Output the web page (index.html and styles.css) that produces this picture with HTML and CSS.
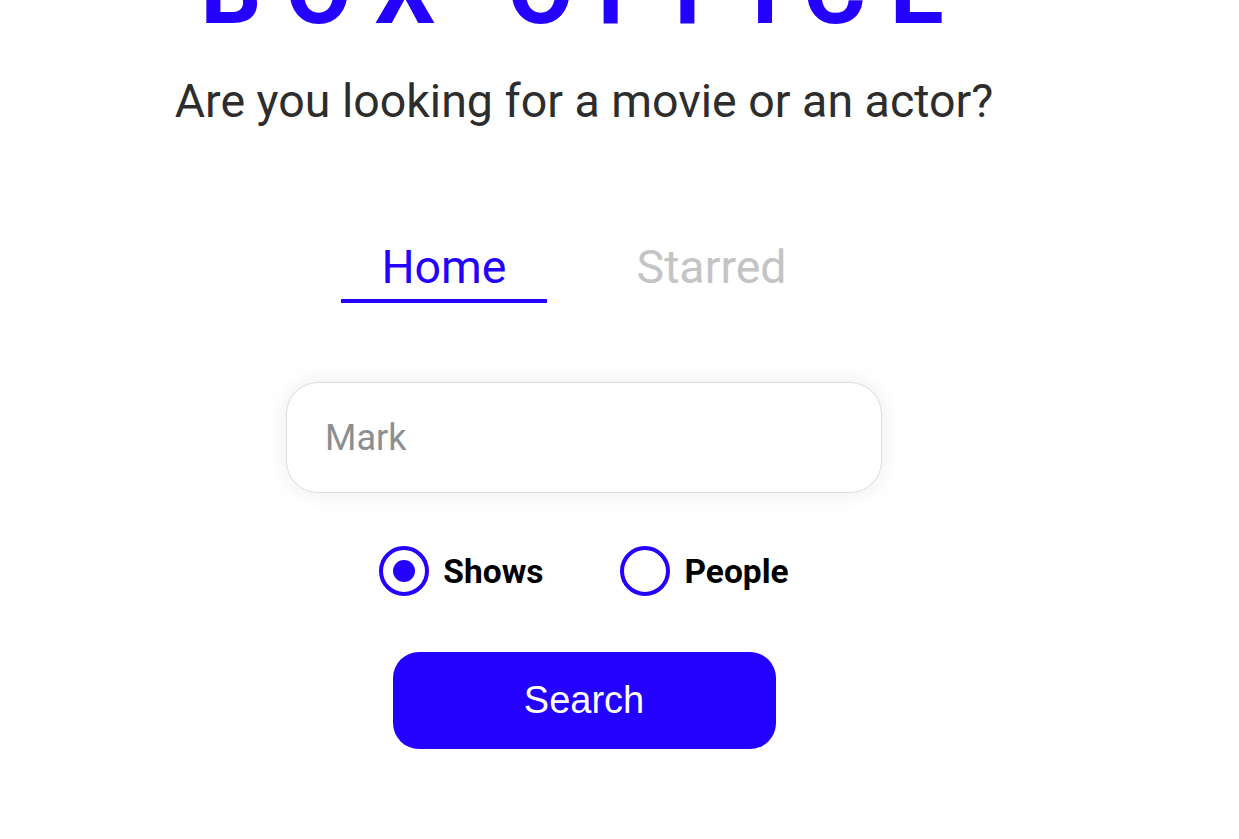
FILE: index.html
```html
<!DOCTYPE html>
<html lang="en">
<head>
<meta charset="utf-8">
<title>Box Office</title>
<link rel="stylesheet" href="styles.css">
</head>
<body>
<div class="page">
  <header class="title-wrap">
    <h1 class="title">Box Office</h1>
    <p class="subtitle">Are you looking for a movie or an actor?</p>
  </header>
  <nav class="tabs">
    <a class="tab tab-active" href="#">Home</a>
    <a class="tab" href="#">Starred</a>
  </nav>
  <main class="search">
    <input class="search-input" type="text" placeholder="Mark">
    <div class="radios">
      <label class="radio">
        <input type="radio" name="kind" checked>
        <span class="radio-mark"></span>
        <span class="radio-label">Shows</span>
      </label>
      <label class="radio">
        <input type="radio" name="kind">
        <span class="radio-mark"></span>
        <span class="radio-label">People</span>
      </label>
    </div>
    <button class="search-btn" type="button">Search</button>
  </main>
</div>
</body>
</html>
```

FILE: styles.css
```css
html, body {
  margin: 0;
  padding: 0;
  background: #ffffff;
}

body {
  font-family: Roboto, "Liberation Sans", sans-serif;
  overflow: hidden;
}

.page {
  width: 1168px;
  display: flex;
  flex-direction: column;
  align-items: center;
}

.title-wrap {
  text-align: center;
  margin-top: -66px;
}

.title {
  margin: 0;
  font-size: 96px;
  font-weight: 700;
  line-height: normal;
  letter-spacing: 24px;
  text-transform: uppercase;
  color: #2400ff;
}

.subtitle {
  margin: 28px 0 0;
  font-size: 46.5px;
  line-height: normal;
  color: #2d2d2d;
}

.tabs {
  display: flex;
  gap: 50px;
  margin-top: 112px;
}

.tab {
  display: block;
  padding: 0 40px 5px;
  font-size: 46.5px;
  line-height: normal;
  text-decoration: none;
  color: #c4c4c4;
  border-bottom: 4px solid transparent;
}

.tab-active {
  color: #2400ff;
  border-bottom-color: #2400ff;
}

.search {
  display: flex;
  flex-direction: column;
  align-items: center;
  margin-top: 79px;
}

.search-input {
  box-sizing: border-box;
  width: 596px;
  height: 111px;
  padding: 0 38px;
  border: 1px solid #dedede;
  border-radius: 32px;
  box-shadow: 0 0 22px rgba(0, 0, 0, 0.08);
  font-family: Roboto, "Liberation Sans", sans-serif;
  font-size: 36px;
  color: #333;
  outline: none;
  background: #fff;
}

.search-input::placeholder {
  color: #8e8e8e;
}

.radios {
  display: flex;
  gap: 77px;
  margin-top: 53px;
}

.radio {
  display: flex;
  align-items: center;
  gap: 14px;
  cursor: pointer;
}

.radio input {
  display: none;
}

.radio-mark {
  box-sizing: border-box;
  width: 50px;
  height: 50px;
  border: 4px solid #2400ff;
  border-radius: 50%;
  display: flex;
  align-items: center;
  justify-content: center;
}

.radio input:checked + .radio-mark::after {
  content: "";
  width: 22px;
  height: 22px;
  border-radius: 50%;
  background: #2400ff;
}

.radio-label {
  font-size: 33.5px;
  font-weight: 700;
  color: #000;
}

.search-btn {
  margin-top: 56px;
  width: 383px;
  height: 97px;
  border: none;
  border-radius: 26px;
  background: #2400ff;
  color: #fff;
  font-family: "Liberation Sans", Arial, sans-serif;
  font-size: 38px;
  cursor: pointer;
}
```
